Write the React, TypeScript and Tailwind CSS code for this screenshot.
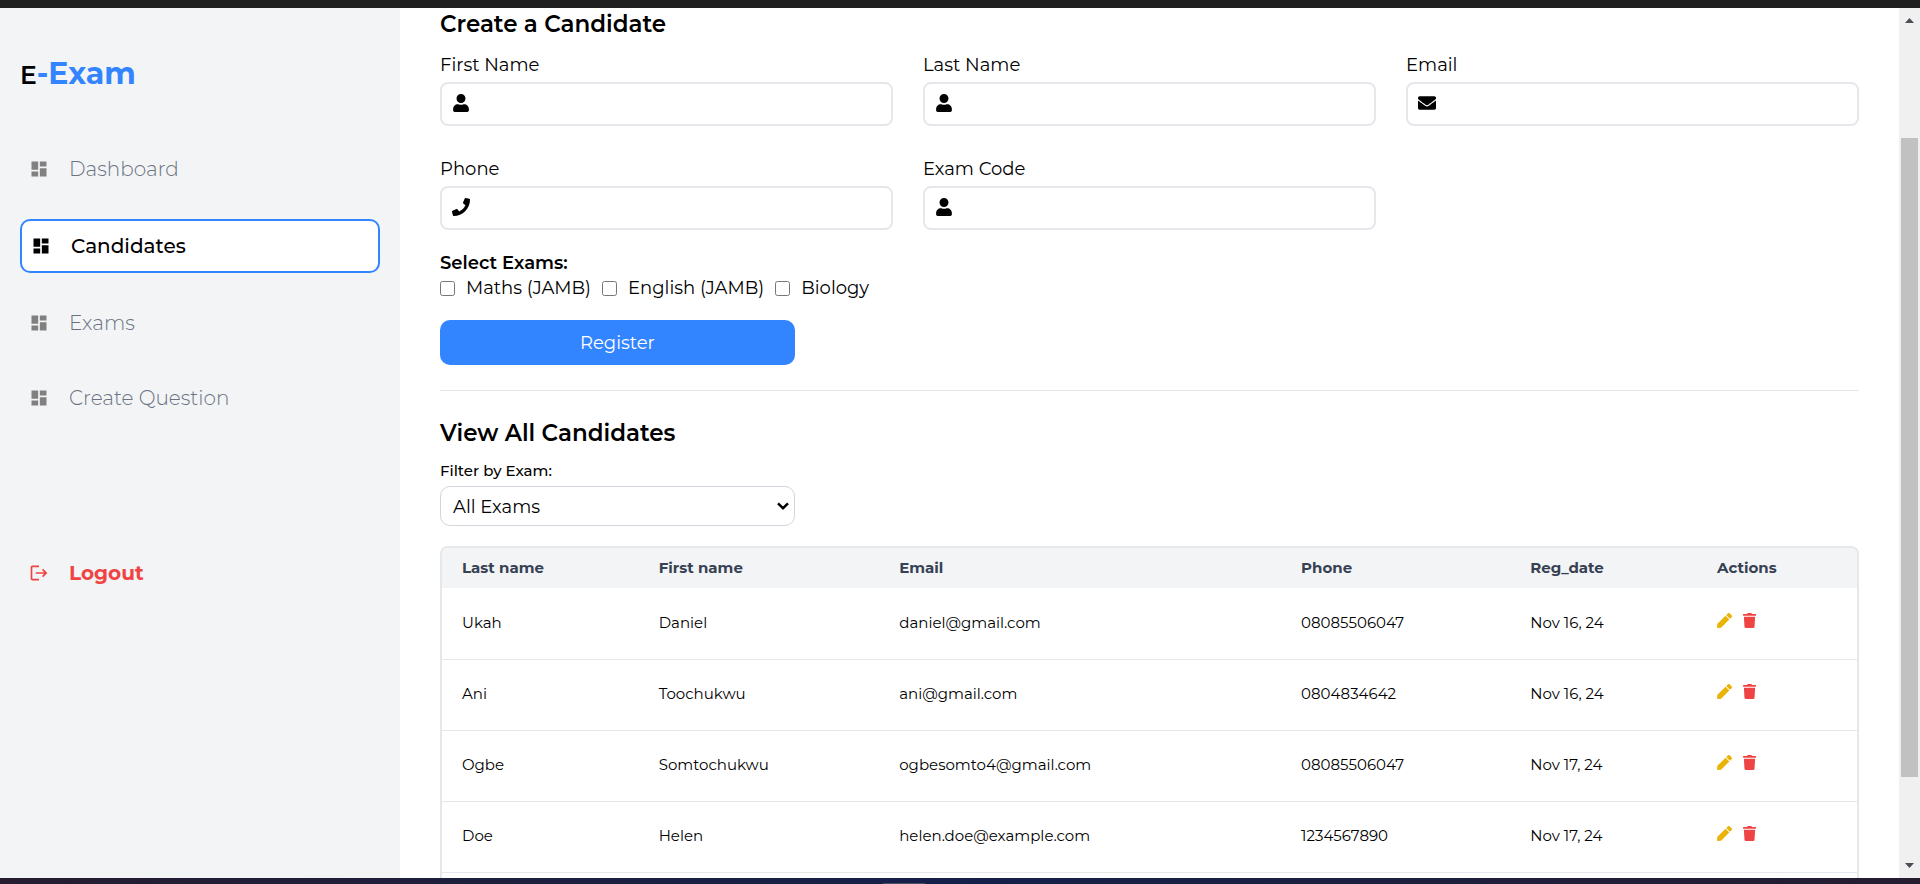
import { useState } from "react";
import type { ReactNode } from "react";
import type { IconType } from "react-icons";
import { FaEnvelope, FaPen, FaPhone, FaTrash, FaUser } from "react-icons/fa";
import { MdDashboard, MdLogout } from "react-icons/md";

const navItems = ["Dashboard", "Candidates", "Exams", "Create Question"];

const fields: { id: string; label: string; type: string; icon: IconType }[] = [
  { id: "firstName", label: "First Name", type: "text", icon: FaUser },
  { id: "lastName", label: "Last Name", type: "text", icon: FaUser },
  { id: "email", label: "Email", type: "email", icon: FaEnvelope },
  { id: "phone", label: "Phone", type: "tel", icon: FaPhone },
  { id: "examCode", label: "Exam Code", type: "text", icon: FaUser },
];

const exams = ["Maths (JAMB)", "English (JAMB)", "Biology"];

const columns = [
  { name: "Last name", width: "w-[13.9%]" },
  { name: "First name", width: "w-[17%]" },
  { name: "Email", width: "w-[28.4%]" },
  { name: "Phone", width: "w-[16.2%]" },
  { name: "Reg_date", width: "w-[13.2%]" },
  { name: "Actions", width: "w-[11.3%]" },
];

const candidates = [
  ["Ukah", "Daniel", "daniel@gmail.com", "08085506047", "Nov 16, 24"],
  ["Ani", "Toochukwu", "ani@gmail.com", "0804834642", "Nov 16, 24"],
  ["Ogbe", "Somtochukwu", "ogbesomto4@gmail.com", "08085506047", "Nov 17, 24"],
  ["Doe", "Helen", "helen.doe@example.com", "1234567890", "Nov 17, 24"],
];

function NavLink({ label, active }: { label: string; active: boolean }) {
  return (
    <a
      href="#"
      aria-current={active ? "page" : undefined}
      className={
        active
          ? "flex h-[54px] items-center gap-5 rounded-[10px] border-2 border-[#3385ff] bg-white px-[9px] text-xl font-medium text-black"
          : "flex h-[50px] items-center gap-5 px-[9px] text-xl font-light text-gray-500"
      }
    >
      <MdDashboard size={20} className={active ? "text-black" : "text-[#808080]"} />
      {label}
    </a>
  );
}

function Sidebar() {
  return (
    <aside className="w-[400px] shrink-0 bg-gray-100 px-5 pt-11">
      <h1 className="text-[30px] leading-[44px] font-bold text-[#3385ff]">
        <span className="text-[25px] font-semibold text-black">E</span>-Exam
      </h1>
      <nav className="mt-[47px] flex flex-col gap-[25px]">
        {navItems.map((label) => (
          <NavLink key={label} label={label} active={label === "Candidates"} />
        ))}
      </nav>
      <button type="button" className="mt-[125px] flex h-[50px] items-center gap-5 px-[9px] text-xl font-bold text-[#ef4444]">
        <MdLogout size={20} />
        Logout
      </button>
    </aside>
  );
}

function Field({ id, label, type, icon: Icon }: { id: string; label: string; type: string; icon: IconType }) {
  return (
    <div>
      <label htmlFor={id} className="block leading-7">{label}</label>
      <div className="mt-[3px] flex h-11 items-center gap-2.5 rounded-[8px] border-2 border-gray-200 px-2.5 pb-0.5">
        <Icon size={18} className="shrink-0" />
        <input id={id} type={type} className="min-w-0 flex-1 outline-none" />
      </div>
    </div>
  );
}

function CandidateForm() {
  const [checked, setChecked] = useState<string[]>([]);
  const toggle = (exam: string) =>
    setChecked((c) => (c.includes(exam) ? c.filter((e) => e !== exam) : [...c, exam]));

  return (
    <form onSubmit={(e) => e.preventDefault()}>
      <h2 className="text-[23px] leading-8 font-semibold">Create a Candidate</h2>
      <div className="mt-[11px] grid grid-cols-3 gap-x-[30px] gap-y-[29px]">
        {fields.map((f) => (
          <Field key={f.id} {...f} />
        ))}
      </div>
      <fieldset className="mt-5">
        <legend className="leading-[26px] font-semibold">Select Exams:</legend>
        <div className="flex gap-[11px] leading-6">
          {exams.map((exam) => (
            <label key={exam} className="flex items-center gap-[11px]">
              <input
                type="checkbox"
                className="size-[15px]"
                checked={checked.includes(exam)}
                onChange={() => toggle(exam)}
              />
              {exam}
            </label>
          ))}
        </div>
      </fieldset>
      <button type="submit" className="mt-5 h-[45px] w-1/4 rounded-[10px] bg-[#3385ff] pt-0.5 text-white">
        Register
      </button>
    </form>
  );
}

function Cell({ children }: { children: ReactNode }) {
  return <td className="px-5">{children}</td>;
}

function CandidateTable() {
  return (
    <div className="mt-5 overflow-hidden rounded-t-[8px] border-2 border-b-0 border-gray-200">
      <table className="w-full table-fixed text-left text-[15px]">
        <thead>
          <tr className="h-10 bg-gray-100 text-gray-700">
            {columns.map((c) => (
              <th key={c.name} scope="col" className={`px-5 font-bold ${c.width}`}>{c.name}</th>
            ))}
          </tr>
        </thead>
        <tbody>
          {candidates.map((row) => (
            <tr key={row[2]} className="h-[71px] border-b border-gray-200">
              {row.map((value, i) => (
                <Cell key={i}>{value}</Cell>
              ))}
              <Cell>
                <div className="flex items-center gap-2.5 pb-1.5">
                  <button type="button" aria-label="Edit candidate" className="text-[#eab308]">
                    <FaPen size={15} />
                  </button>
                  <button type="button" aria-label="Delete candidate" className="text-[#ef4444]">
                    <FaTrash size={15} />
                  </button>
                </div>
              </Cell>
            </tr>
          ))}
          <tr className="h-[71px]">
            <td colSpan={6} />
          </tr>
        </tbody>
      </table>
    </div>
  );
}

function ExamFilter() {
  return (
    <>
      <label htmlFor="examFilter" className="mt-2.5 block pt-px text-[15px] leading-[22px] font-medium">
        Filter by Exam:
      </label>
      <div className="relative mt-1 w-1/4">
        <select
          id="examFilter"
          className="block h-10 w-full appearance-none rounded-[10px] border border-gray-300 bg-white px-3 pt-0.5"
        >
          <option>All Exams</option>
          {exams.map((exam) => (
            <option key={exam}>{exam}</option>
          ))}
        </select>
        <svg
          width="12"
          height="8"
          viewBox="0 0 12 8"
          fill="none"
          stroke="currentColor"
          strokeWidth="2.4"
          className="pointer-events-none absolute top-4 right-1.5"
          aria-hidden="true"
        >
          <path d="M1 1.300 6 6.200 11 1.300" />
        </svg>
      </div>
    </>
  );
}

function ScrollRail() {
  return (
    <div className="flex w-[21px] shrink-0 flex-col items-center bg-[#f0f0f0] text-[#4b4e57]" aria-hidden="true">
      <svg width="9" height="5" viewBox="0 0 9 5" className="mt-2.5 shrink-0"><path d="M0 5 4.500 0 9 5Z" fill="currentColor" /></svg>
      <div className="grow-[115]" />
      <div className="w-[17px] grow-[639] bg-[#c1c1c1]" />
      <div className="grow-[86]" />
      <svg width="9" height="5" viewBox="0 0 9 5" className="mb-2.5 shrink-0"><path d="M0 0 4.500 5 9 0Z" fill="currentColor" /></svg>
    </div>
  );
}

export default function App() {
  return (
    <div className="flex h-screen flex-col overflow-hidden bg-white font-['Montserrat','Inter',sans-serif] text-[18px] text-black">
      <div className="h-2 shrink-0 bg-[#202020]" />
      <div className="flex min-h-0 flex-1">
        <Sidebar />
        <main className="min-w-0 flex-1 overflow-hidden px-10">
          <CandidateForm />
          <hr className="mt-[25px] border-gray-200" />
          <section className="pt-[26px]">
            <h2 className="text-[23px] leading-8 font-semibold">View All Candidates</h2>
            <ExamFilter />
            <CandidateTable />
          </section>
        </main>
        <ScrollRail />
      </div>
      <div className="flex h-1.5 shrink-0 items-end bg-linear-to-r from-[#251c30] via-[#14204a] to-[#251c30]">
        <div className="ml-[46%] h-px w-[42px] bg-[#4a4d66]" />
      </div>
    </div>
  );
}
